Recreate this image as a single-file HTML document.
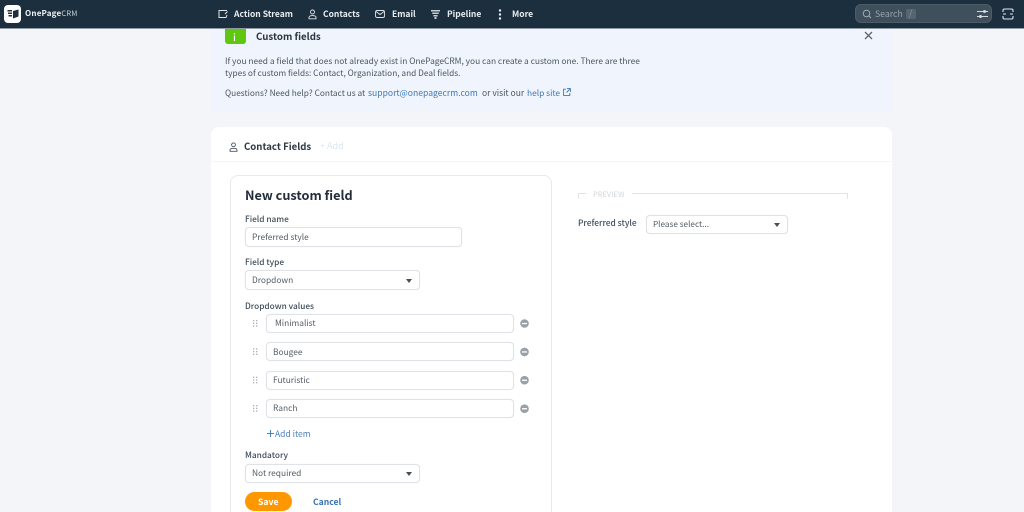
<!DOCTYPE html>
<html style="overflow:hidden;height:512px"><head><meta charset="utf-8"><style>
html,body{margin:0;padding:0}
body{width:1024px;height:512px;overflow:hidden;background:#f4f5f8;position:relative;font-family:"Noto Sans CJK SC","Liberation Sans",sans-serif;color:#4a5560}
#w{position:absolute;left:0;top:0;width:1024px;height:512px;overflow:hidden}
.t{position:absolute;white-space:nowrap;line-height:14px;font-size:8.4px}
.b{position:absolute;box-sizing:border-box;background:#fff}
.nav{color:#e8ecef;font-size:8.5px;font-weight:700;top:7px}
.lbl{color:#3f4c5c;font-size:8.3px;font-weight:500}
.inp{border:1px solid #dfe2e6;border-radius:4px;box-shadow:0 0 1px #e5e7ea}
.val{color:#555c64;font-size:8.4px}
.arrow{position:absolute;width:0;height:0;border-left:3px solid transparent;border-right:3px solid transparent;border-top:4px solid #454f59}
svg{position:absolute;overflow:visible}
</style></head><body><div id="w">

<div class="b" style="left:211px;top:29px;width:681px;height:82px;background:#f0f5fd"></div>
<div class="b" style="left:225px;top:29px;width:21px;height:15px;background:#5fc70f;border-radius:0 0 3px 3px"></div>
<div class="t" style="left:233px;top:30px;color:#fff;font-size:10px;font-weight:500">i</div>
<div class="t" style="left:256px;top:29px;color:#2b3440;font-size:9.7px;font-weight:700">Custom fields</div>
<svg style="left:864px;top:31px" width="9" height="9"><path d="M1 1L8 8M8 1L1 8" stroke="#5a6470" stroke-width="1.3"/></svg>
<div class="t" style="left:225px;top:54px">If you need a field that does not already exist in OnePageCRM, you can create a custom one. There are three</div>
<div class="t" style="left:225px;top:66px;font-size:8.3px">types of custom fields: Contact, Organization, and Deal fields.</div>
<div class="t" style="left:225px;top:86px;font-size:8.3px">Questions? Need help? Contact us at</div>
<div class="t" style="left:368px;top:86px;color:#3d78b5;font-size:8.6px">support@onepagecrm.com</div>
<div class="t" style="left:482px;top:86px;font-size:8.5px">or visit our</div>
<div class="t" style="left:527px;top:86px;color:#3d78b5;font-size:8.4px">help site</div>
<svg style="left:563px;top:88px" width="8" height="8" fill="none" stroke="#3d78b5" stroke-width=".9"><path d="M3 1.200H.6V7.400H6.800V5M4 .6H7.400V4M7.200 .8L3.500 4.500"/></svg>

<div class="b" style="left:211px;top:127px;width:681px;height:400px;border-radius:8px 8px 0 0"></div>
<div class="b" style="left:211px;top:161px;width:681px;height:1px;background:#f5f6f8"></div>
<svg style="left:229px;top:142px" width="9" height="10" fill="none" stroke="#4a5560" stroke-width=".9"><circle cx="4.500" cy="2.800" r="1.900"/><path d="M1 9.300V8C1 6.800 2.500 6.300 4.500 6.300S8 6.800 8 8V9.300Z"/></svg>
<div class="t" style="left:244px;top:139px;color:#2f3843;font-size:9.6px;font-weight:700">Contact Fields</div>
<div class="t" style="left:320px;top:139px;color:#dde6f0;font-size:9px">+ Add</div>

<div class="b" style="left:230px;top:175px;width:322px;height:350px;border:1px solid #e8e9ec;border-radius:8px"></div>
<div class="t" style="left:245px;top:188px;color:#232d3a;font-size:12.7px;font-weight:700">New custom field</div>
<div class="t lbl" style="left:245px;top:212px">Field name</div>
<div class="b inp" style="left:245px;top:227px;width:217px;height:20px"></div>
<div class="t val" style="left:252px;top:230px">Preferred style</div>
<div class="t lbl" style="left:245px;top:255px">Field type</div>
<div class="b inp" style="left:245px;top:270px;width:175px;height:20px"></div>
<div class="t val" style="left:252px;top:273px">Dropdown</div>
<div class="arrow" style="left:406px;top:279px"></div>
<div class="t lbl" style="left:245px;top:299px">Dropdown values</div>

<svg style="left:253px;top:320px" width="5" height="90" fill="#a9afb6"><g id="d"><rect x="0" y="0" width="1.300" height="1.300"/><rect x="3" y="0" width="1.300" height="1.300"/><rect x="0" y="2.700" width="1.300" height="1.300"/><rect x="3" y="2.700" width="1.300" height="1.300"/><rect x="0" y="5.400" width="1.300" height="1.300"/><rect x="3" y="5.400" width="1.300" height="1.300"/></g><use href="#d" y="28.300"/><use href="#d" y="56.700"/><use href="#d" y="85"/></svg>

<div class="b inp" style="left:266px;top:314px;width:248px;height:19px"></div>
<div class="t val" style="left:275px;top:316px">Minimalist</div>
<div class="b inp" style="left:266px;top:342px;width:248px;height:19px"></div>
<div class="t val" style="left:273px;top:345px">Bougee</div>
<div class="b inp" style="left:266px;top:371px;width:248px;height:19px"></div>
<div class="t val" style="left:273px;top:373px">Futuristic</div>
<div class="b inp" style="left:266px;top:399px;width:248px;height:19px"></div>
<div class="t val" style="left:273px;top:401px">Ranch</div>

<svg style="left:520px;top:319px" width="9" height="95"><g id="m"><circle cx="4.500" cy="4.500" r="4.300" fill="#9aa0a7"/><rect x="2" y="3.900" width="5" height="1.300" fill="#fff"/></g><use href="#m" y="28.400"/><use href="#m" y="56.700"/><use href="#m" y="85.200"/></svg>

<svg style="left:267px;top:430px" width="7" height="7" stroke="#4a82bf" stroke-width="1"><path d="M3.500 0V7M0 3.500H7"/></svg>
<div class="t" style="left:275px;top:427px;color:#4a82bf;font-size:8.5px">Add item</div>
<div class="t lbl" style="left:245px;top:448px">Mandatory</div>
<div class="b inp" style="left:245px;top:464px;width:175px;height:19px"></div>
<div class="t val" style="left:252px;top:466px">Not required</div>
<div class="arrow" style="left:406px;top:472px"></div>
<div class="b" style="left:245px;top:492px;width:47px;height:19px;background:#ff9800;border-radius:10px"></div>
<div class="t" style="left:258px;top:495px;color:#fff;font-size:8.7px;font-weight:700">Save</div>
<div class="t" style="left:313px;top:495px;color:#3a73b3;font-size:8.6px;font-weight:700">Cancel</div>

<svg style="left:578px;top:193px" width="270" height="7" fill="none" stroke="#e2e4e7"><path d="M.5 6V.5H8M54 .5H269.500V6"/></svg>
<div class="t" style="left:593px;top:188px;color:#d3d6da;font-size:7.500px">PREVIEW</div>
<div class="t lbl" style="left:578px;top:216px;font-size:8.4px">Preferred style</div>
<div class="b inp" style="left:646px;top:215px;width:142px;height:19px"></div>
<div class="t val" style="left:653px;top:217px;font-size:8.2px">Please select...</div>
<div class="arrow" style="left:774px;top:223px"></div>

<div class="b" style="left:0;top:0;width:1024px;height:29px;background:#1c2f3f;border-bottom:1px solid #8f9aa3"></div>
<div class="b" style="left:4px;top:5px;width:17px;height:18px;border-radius:4px"></div>
<svg style="left:7px;top:9px" width="12" height="10" fill="#1c2f3f"><path d="M6 2L11.500 .5V7.500L6 9.500Z"/><path d="M.5 1H5V2.500H.5ZM1 3.500H5V5H1ZM1.500 6H5V7.500H1.500Z"/></svg>
<div class="t" style="left:25px;top:7px;color:#f0f3f5;font-size:8px;font-weight:700;letter-spacing:.2px">OnePage<span style="font-weight:400;color:#c7ced4;font-size:7.500px">CRM</span></div>

<svg style="left:218px;top:9px" width="11" height="10" fill="none" stroke="#dfe4e8" stroke-width="1"><path d="M9 1.500H1V8.500H8L9 6"/><path d="M7 5L9.500 2.500"/></svg>
<div class="t nav" style="left:234px">Action Stream</div>
<svg style="left:308px;top:9px" width="9" height="11" fill="none" stroke="#dfe4e8" stroke-width=".9"><circle cx="4.500" cy="3" r="2"/><path d="M1 9.800V8.400C1 7.200 2.500 6.600 4.500 6.600S8 7.200 8 8.400V9.800Z"/></svg>
<div class="t nav" style="left:323px">Contacts</div>
<svg style="left:375px;top:10px" width="10" height="8" fill="none" stroke="#dfe4e8" stroke-width=".9"><rect x=".5" y=".5" width="9" height="7" rx="1.500"/><path d="M1 1.500L5 4.500L9 1.500"/></svg>
<div class="t nav" style="left:392px">Email</div>
<svg style="left:431px;top:10px" width="9" height="9" fill="#c8cfd4"><path d="M0 0H9V1.500H0ZM1.200 2.500H7.800V4H1.200ZM2.400 5H6.600V6.500H2.400ZM3.500 7H5.500V9H3.500Z"/></svg>
<div class="t nav" style="left:447px">Pipeline</div>
<svg style="left:498px;top:9px" width="4" height="11" fill="#e8ecef"><circle cx="2" cy="1.500" r="1.200"/><circle cx="2" cy="5.500" r="1.200"/><circle cx="2" cy="9.500" r="1.200"/></svg>
<div class="t nav" style="left:512px">More</div>

<div class="b" style="left:855px;top:4px;width:137px;height:19px;background:#3f505c;border:1px solid #4d5d68;border-radius:6px"></div>
<svg style="left:862px;top:9px" width="10" height="10" fill="none" stroke="#aab4bb" stroke-width=".9"><circle cx="4.500" cy="4.500" r="3.300"/><path d="M7 7L9 9"/></svg>
<div class="t" style="left:875px;top:7px;color:#98a4ac;font-size:8.7px">Search</div>
<div class="b" style="left:906px;top:9px;width:10px;height:10px;background:#56656f;border-radius:2px"></div>
<div class="t" style="left:909px;top:7px;color:#8e9aa2;font-size:8px">/</div>
<svg style="left:977px;top:9px" width="11" height="10" fill="#d5dade"><rect x="0" y="2" width="11" height="1"/><rect x="0" y="7" width="11" height="1"/><circle cx="7.500" cy="2.500" r="1.500"/><circle cx="3.500" cy="7.500" r="1.500"/></svg>
<svg style="left:1002px;top:8px" width="12" height="12" fill="none" stroke="#e4e8eb" stroke-width="1.100"><path d="M1 4V2.500Q1 1 2.500 1H9.500Q11 1 11 2.500V4M1 8V9.500Q1 11 2.500 11H9.500Q11 11 11 9.500V8"/><path d="M1 6H4M8 6H11"/></svg>

</div></body></html>
